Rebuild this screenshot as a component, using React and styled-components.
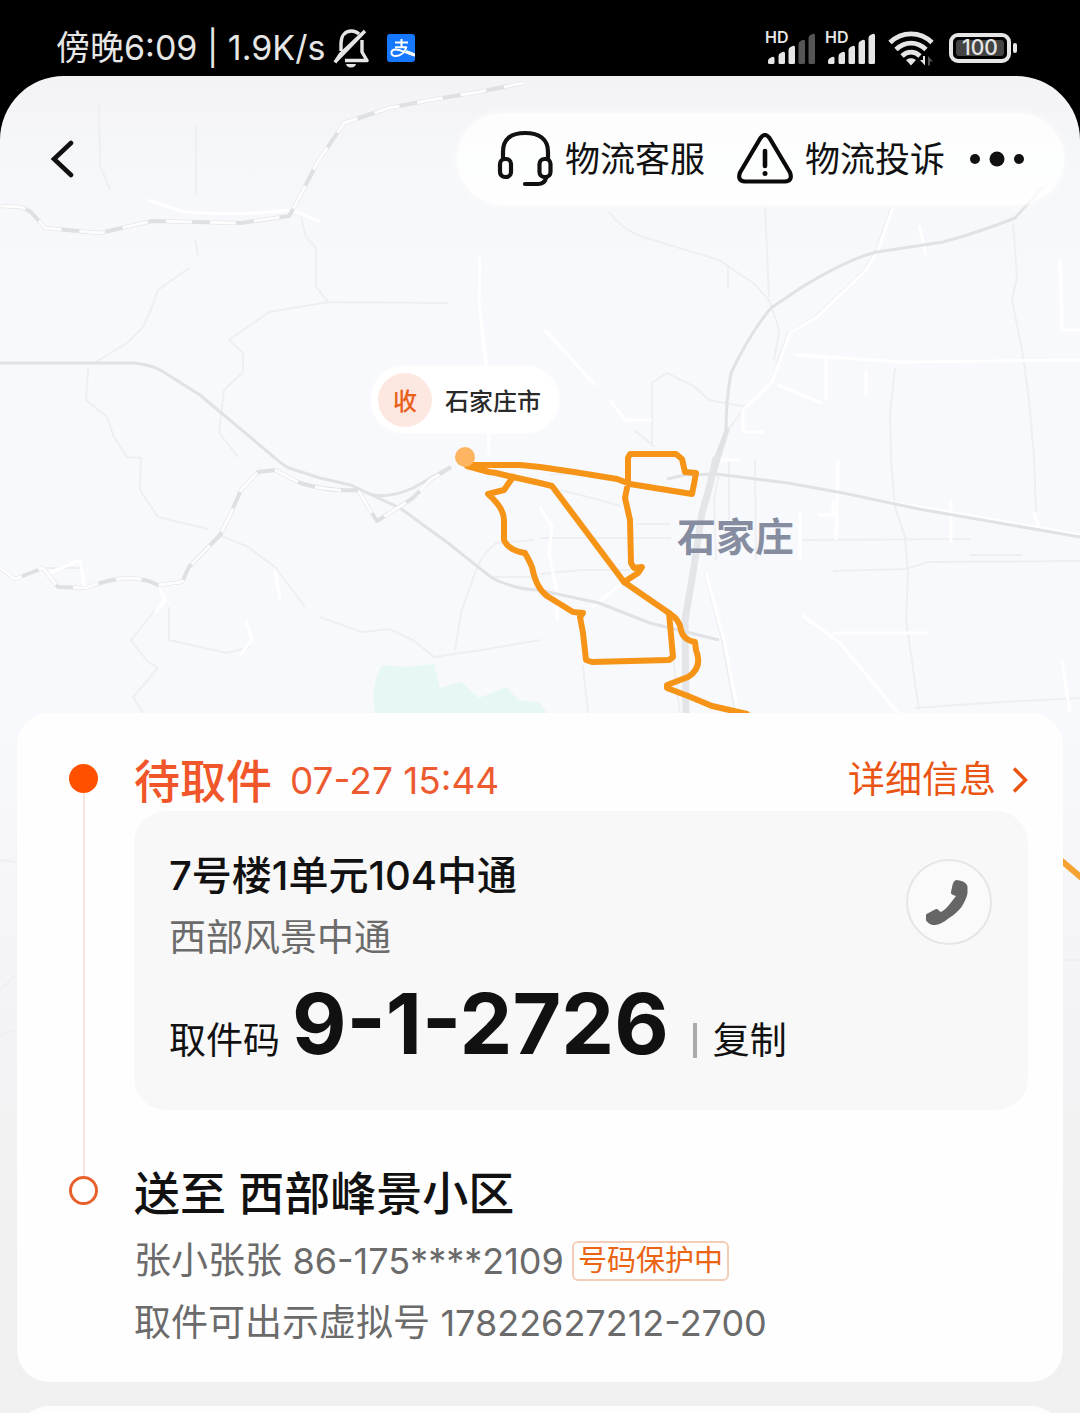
import React from "react";
import styled, { createGlobalStyle } from "styled-components";

const GlobalStyle = createGlobalStyle`
  *, *::before, *::after { box-sizing: border-box; }
  body {
    margin: 0;
    background: #000;
    font-family: Inter, "Noto Sans CJK SC", "Liberation Sans", sans-serif;
    color: #111;
  }
  button { font: inherit; color: inherit; background: none; border: 0; padding: 0; cursor: pointer; }
  a { color: inherit; text-decoration: none; }
  h1, h2, p { margin: 0; font-weight: inherit; }
  svg { display: block; }
`;

/* ---------- status bar ---------- */

const Page = styled.div`
  display: flex;
  flex-direction: column;
  min-height: 100vh;
  overflow: hidden;
`;

const StatusBar = styled.div`
  display: flex;
  align-items: center;
  justify-content: space-between;
  height: 76px;
  padding: 20px 69px 0 56px;
  color: #e6e6e6;
`;

const StatusGroup = styled.div`
  display: flex;
  align-items: center;
  gap: ${(p) => p.$gap}px;
`;

const Clock = styled.span`
  font-size: 34px;
  line-height: 40px;
  white-space: nowrap;
`;

const AppBadge = styled.span`
  display: flex;
  width: 28px;
  height: 28px;
  margin-left: 10px;
  border-radius: 3px;
  background: #1677ff;
`;

const Battery = styled.span`
  position: relative;
  display: flex;
  width: 62px;
  height: 30px;
  margin-left: 5px;
  padding: 3px;
  border: 4px solid #e6e6e6;
  border-radius: 9px;

  &::after {
    content: "";
    position: absolute;
    right: -10px;
    top: 6px;
    width: 4px;
    height: 10px;
    border-radius: 2px;
    background: #e6e6e6;
  }
`;

const BatteryLevel = styled.span`
  flex: 1;
  border-radius: 3px;
  background: #444;
  font-size: 21px;
  font-weight: 500;
  line-height: 16px;
  text-align: center;
`;

/* ---------- screen and header ---------- */

const Screen = styled.main`
  position: relative;
  display: flex;
  flex: 1;
  flex-direction: column;
  padding-top: 37px;
  overflow: hidden;
  border-radius: 64px 64px 0 0;
  background: linear-gradient(#f3f3f5 0, #f6f7fa 80px, #f8f9fd 200px, #f8f9fd 640px, #f4f4f7 900px, #f0f0f0 1200px);
`;

const MapLayer = styled.div`
  position: absolute;
  inset: 0 0 auto 0;
`;

const Header = styled.header`
  position: relative;
  display: flex;
  align-items: center;
  justify-content: space-between;
  padding: 0 16px 0 40px;
`;

const BackButton = styled.button`
  display: flex;
  padding: 10px;
`;

const ActionPill = styled.nav`
  display: flex;
  align-items: center;
  gap: 32px;
  height: 92px;
  padding: 0 39px 0 40px;
  border-radius: 46px;
  background: rgba(255, 255, 255, 0.8);
  box-shadow: 0 0 8px rgba(255, 255, 255, 0.8);
`;

const PillGroup = styled.div`
  display: flex;
  align-items: center;
  gap: 24px;
`;

const PillAction = styled.button`
  display: flex;
  align-items: center;
  gap: 12px;
  font-size: 35px;
  line-height: 48px;
  white-space: nowrap;
`;

const MapStage = styled.section`
  position: relative;
  height: 508px;
`;

const DestinationPin = styled.div`
  position: absolute;
  left: 371px;
  top: 161px;
  display: flex;
  align-items: center;
  gap: 13px;
  height: 67px;
  padding: 0 18px 0 7px;
  border-radius: 34px;
  background: #fff;
  box-shadow: 0 0 4px #fff;
  font-size: 24px;
  font-weight: 500;
  color: #2a2a2a;
  white-space: nowrap;
`;

const PinMark = styled.span`
  display: grid;
  place-items: center;
  width: 54px;
  height: 54px;
  border-radius: 50%;
  background: #fde7e1;
  color: #e8601c;
`;

const CityName = styled.span`
  position: absolute;
  left: 677px;
  top: 304px;
  font-size: 39px;
  font-weight: 700;
  line-height: 56px;
  color: #868da0;
`;

/* ---------- delivery sheet ---------- */

const Sheet = styled.section`
  position: relative;
  margin: 0 17px 24px;
  padding: 40px 35px 28px 52px;
  border-radius: 32px;
  background: #fefefe;
`;

const Step = styled.div`
  display: grid;
  grid-template-columns: 29px 1fr;
  column-gap: 36px;
`;

const Rail = styled.div`
  display: flex;
  flex-direction: column;
  align-items: center;

  &::before {
    content: "";
    width: 2px;
    height: 11px;
    background: ${(p) => (p.$last ? "#f6e6df" : "transparent")};
  }

  &::after {
    content: "";
    flex: 1;
    width: 2px;
    background: ${(p) => (p.$last ? "transparent" : "#f6e6df")};
  }
`;

const Dot = styled.span`
  width: 29px;
  height: 29px;
  border: 3px solid ${(p) => (p.$filled ? "#ff5000" : "#e8602c")};
  border-radius: 50%;
  background: ${(p) => (p.$filled ? "#ff5000" : "#fff")};
`;

const StepBody = styled.div`
  min-width: 0;
  padding-bottom: ${(p) => p.$space || 0}px;
`;

const StepHead = styled.div`
  display: flex;
  align-items: flex-start;
  justify-content: space-between;
  height: 52px;
  line-height: 56px;
  white-space: nowrap;
`;

const StepTitle = styled.h1`
  height: 52px;
  font-size: 46px;
  font-weight: 500;
  line-height: 56px;
  color: ${(p) => p.$color || "#111"};
`;

const StatusWrap = styled.div`
  display: flex;
  align-items: flex-start;
  gap: 18px;
  color: #ee5a30;
`;

const StatusTime = styled.time`
  font-size: 37px;
`;

const DetailLink = styled.a`
  display: flex;
  align-items: center;
  gap: 16px;
  height: 54px;
  font-size: 37px;
  color: #ea5514;
`;

const PickupBox = styled.div`
  margin-top: 6px;
  padding: 34px 36px 29px 35px;
  border-radius: 32px;
  background: #f8f8f8;
`;

const PickupTop = styled.div`
  display: flex;
  align-items: flex-start;
  justify-content: space-between;
`;

const PickupPlace = styled.h2`
  height: 62px;
  font-size: 40px;
  font-weight: 500;
  line-height: 62px;
`;

const BodyLine = styled.p`
  display: flex;
  align-items: center;
  gap: 8px;
  height: 62px;
  font-size: 37px;
  line-height: 62px;
  color: #6b6b6b;
  white-space: nowrap;
`;

const PhoneNumber = styled.span`
  font-size: 36px;
`;

const CallButton = styled.button`
  display: grid;
  place-items: center;
  width: 86px;
  height: 86px;
  margin-top: 14px;
  border: 2px solid #e6e6e6;
  border-radius: 50%;
  background: #fafafa;
`;

const CodeRow = styled.div`
  display: flex;
  align-items: baseline;
  height: 112px;
  font-size: 37px;
  line-height: 110px;
  white-space: nowrap;
`;

const Code = styled.strong`
  margin-left: 12px;
  font-size: 84px;
  font-weight: 700;
`;

const CopyButton = styled.button`
  margin-left: 24px;

  &::before {
    content: "";
    display: inline-block;
    width: 4px;
    height: 35px;
    margin-right: 16px;
    vertical-align: -4px;
    background: #aaa;
  }
`;

const Recipient = styled.div`
  margin-top: 13px;
`;

const ProtectTag = styled.span`
  padding: 0 4px;
  border: 2px solid #f3cdb8;
  border-radius: 6px;
  font-size: 29px;
  line-height: 36px;
  color: #ea6414;
`;

const NextPeek = styled.div`
  position: relative;
  flex: 1;
  min-height: 7px;
  max-height: 64px;
  margin: 0 17px;
  overflow: hidden;
`;

const NextCard = styled.div`
  position: absolute;
  inset: 0 0 auto 0;
  height: 64px;
  border-radius: 32px 32px 0 0;
  background: #fdfdfd;
`;

/* ---------- icons ---------- */

const BellOff = () => (
  <svg width="36" height="40" viewBox="0 0 36 40" fill="none" stroke="#e6e6e6" strokeWidth="3.4" strokeLinejoin="round" aria-hidden="true">
    <path d="M8 23V16C8 8 12 3 18.500 3c3 0 5.500 1 7.500 3" />
    <path d="M29 12v12l5 8.500H12" />
    <path d="M2 34.500 7.500 26 32 3M2 34 32 3" />
    <path d="M13 36h10c-.5 2-2 3.500-5 3.500S13.500 38 13 36z" fill="#e6e6e6" stroke="none" />
  </svg>
);

const PayMark = () => (
  <svg width="28" height="28" viewBox="0 0 28 28" fill="none" stroke="#fff" aria-hidden="true">
    <path d="M8 8.500h13M14.500 5v8M8 13.200h12" strokeWidth="2" />
    <path d="M19.500 13c-2 5.500-6 9-10.500 9-6 0-6-6.500-.5-6.500 5.500 0 9.500 3.500 19.500 6" strokeWidth="2" />
    <path d="M19 17.500l9 3.500" strokeWidth="3" />
  </svg>
);

const BARS = [
  [3, 26, 7],
  [13.5, 21, 12],
  [23.5, 15, 18],
  [33.5, 9, 24],
  [43.5, 3, 30],
];

const SignalIcon = styled.svg`
  margin: 0 -4px;
`;

const Signal = ({ level }) => (
  <SignalIcon width="58" height="46" viewBox="-4 -6 58 46" role="img" aria-label="HD">
    <text x="0" y="12" fill="#e6e6e6" fontSize="16" fontWeight="600" fontFamily="Inter, sans-serif">HD</text>
    {BARS.map(([x, y, h], i) => (
      <path
        key={x}
        d={`M${x} ${y + 4}q0-2 2-3l2-1q2.500-1 2.500 1.500V${y + h - 1.5}q0 1.500-1.500 1.500h-3.500q-1.500 0-1.500-1.500z`}
        fill={i < level ? "#e6e6e6" : "#555"}
      />
    ))}
  </SignalIcon>
);

const WifiIcon = styled.svg`
  margin-left: 3px;
`;

const Wifi = () => (
  <WifiIcon width="46" height="36" viewBox="0 0 46 36" fill="none" stroke="#e6e6e6" strokeWidth="4.800" aria-hidden="true">
    <path d="M2 12.500C14 1 32 1 44 12.500" />
    <path d="M8 19.500C17 11 29 11 38 19.500" />
    <path d="M14 26c5.500-5 12.500-5 18 0" />
    <path d="M18 30c3-2.500 7-2.500 10 0l-5 5.500z" fill="#e6e6e6" stroke="none" />
    <path d="M37 26v9.500l-5-5.500h3v-4z" fill="#e6e6e6" stroke="none" />
    <path d="M40 35.500V26l5 5.500h-3v4z" fill="#555" stroke="none" />
  </WifiIcon>
);

const Headset = () => (
  <svg width="56" height="58" viewBox="0 0 56 58" fill="none" stroke="#111" strokeWidth="4.200" strokeLinecap="round" aria-hidden="true">
    <path d="M6 29v-7C6 9 14 3 28 3s23 6 23 19v7" />
    <rect x="3" y="29" width="11" height="18" rx="5" />
    <rect x="42.500" y="29" width="11" height="18" rx="5" />
    <path d="M49 48c-1 4-3 6-8 6H28" />
  </svg>
);

const Warning = () => (
  <svg width="56" height="52" viewBox="0 0 56 52" fill="none" stroke="#0a0a0a" strokeWidth="4.200" strokeLinecap="round" aria-hidden="true">
    <path d="M23.500 5q4.500-6 9 0L53 39.500q3 8.500-5 9H8q-8-.5-5-9z" strokeLinejoin="round" />
    <path d="M28 18v15" strokeWidth="4.600" />
    <circle cx="28" cy="40.500" r="2.500" fill="#0a0a0a" stroke="none" />
  </svg>
);

const More = () => (
  <svg width="56" height="16" viewBox="0 0 56 16" fill="#111" aria-hidden="true">
    <circle cx="6" cy="8" r="5" />
    <circle cx="28" cy="8" r="7.500" />
    <circle cx="50" cy="8" r="5" />
  </svg>
);

const Back = () => (
  <svg width="24" height="38" viewBox="0 0 24 38" fill="none" stroke="#111" strokeWidth="4.600" strokeLinecap="round" strokeLinejoin="miter" aria-hidden="true">
    <path d="M21 3 4 19l17 16" />
  </svg>
);

const Chevron = () => (
  <svg width="16" height="26" viewBox="0 0 16 26" fill="none" stroke="#ea5514" strokeWidth="3.400" aria-hidden="true">
    <path d="M2 1.500 13.500 13 2 24.500" />
  </svg>
);

const Handset = () => (
  <svg width="46" height="46" viewBox="1 -1 46 46" fill="#666" aria-hidden="true">
    <path d="M31 0q4 0 7 1.500Q42.500 4 42.500 7v6Q42 18 36.500 27 31 34 24 38 17 44 10.500 45 6 45.500 3.500 43 0 40 0 37 0 34.500 3.500 33L10 29.500Q12 28.500 13.500 30L15.500 32Q19 31 24 25L31 16 28 15Q25.500 14 26 12L27.500 5Q28.500 1 31 0z" />
  </svg>
);

/* ---------- map ---------- */

const RAILWAYS = [
  "M0 363H134Q152 365 162 371L200 395 275 458Q284 466 289 468L320 478 351 485 365 492Q384 501 413 488L448 468",
  "M365 492 400 508 448 543 492 578Q516 590 540 590L557 594 599 603 650 623 719 640",
  "M667 479 685 475 716 474 788 483 843 493 919 509 1080 537",
  "M1043 187 1015 218Q980 232 943 242L877 252Q850 258 802 287L771 308Q750 333 731 373 726 400 726 430L716 457",
];

const DASHED = [
  "M0 206 21 207 31 212 45 228 100 233 152 221 241 223 289 216 298 200 317 163 344 123 389 108 430 100 479 92 523 83",
  "M0 568 15 579 43 568 58 587 86 588Q130 570 158 585L182 582 189 567 220 535 231 513 241 490 258 472 275 470 300 483Q330 492 358 490L368 507 377 521 413 498 430 480 451 467",
];

const LANES = [
  "M1013 223 1017 277 1012 300 1022 350 1029 400 1034 457 1036 512",
  "M895 368 890 413 891 460 895 507 905 537 908 573 906 620 919 710",
  "M609 212Q622 230 643 237L719 260 753 283 769 300Q780 330 779 333L774 360",
  "M765 207 769 297M728 267V287",
  "M652 447V383L667 373 695 387 709 400 747 407M634 430 655 447",
  "M540 538H671M802 540 970 539M833 571 905 569 929 562 1080 561M636 524H670M970 555H1022M540 574 580 570 630 570M492 577H540",
  "M195 240 198 255M189 268 158 290 152 307 143 327 127 343 96 362",
  "M88 368 86 400 107 417 114 437 127 457 141 458 140 490 158 517 208 529",
  "M301 217 306 237 316 248V287L329 303M448 303 329 302 269 312 229 340 243 353V372L224 390 219 433 238 457",
  "M220 535 248 547 275 567 305 607M320 617 362 632 389 629 413 640 434 657 482 650 540 640",
  "M534 540 496 543Q480 556 475 573L461 613 455 650",
  "M155 610 131 640 148 662 158 668 133 697 143 713M169 607V640L227 653 250 647",
  "M719 473 714 500 716 560M755 460 756 560M729 460V520M915 708 1000 702 1080 698",
  "M891 207 876 250 864 270 815 317 788 333 778 360 772 382 743 410 728 430",
  "M705 573 722 640 735 713M671 640 680 713M583 665 588 713M45 568 80 568",
  "M99 105 100 165 110 190M196 125V195M550 475 571 473M560 490 600 500 620 506",
  "M0 860 15 862M0 990 16 975M0 1035 16 1030M1063 960H1080",
];

const WHITE_ROADS = [
  "M148 200Q170 208 186 212 240 216 293 210L320 222",
  "M480 257 479 303 486 363 489 455",
  "M893 207 878 250 866 270 817 317 790 333 780 360 772 382 743 410",
  "M795 355 902 362 1080 360M826 355V400M866 370V395M778 385 822 403M743 410V432H765",
  "M919 225 926 255M1060 260 1062 330H1080",
  "M540 507 552 527 549 553 557 593V620M592 607 623 583",
  "M706 573 724 640 738 713M802 615 840 643 860 667 898 713M833 633H928",
  "M833 500V515M818 515H838M838 460 836 540M951 500V543M838 493 919 507 1080 535",
  "M45 575 80 560 85 588M158 585 165 600 155 613M246 620 252 640 240 655",
  "M275 570 280 600M545 330 595 385M610 400 625 420 652 420M1062 660 1070 713",
  "M714 460H740M700 565H690M1034 513 1040 530M800 510V560",
];

const ROUTES = [
  "M467 465H520L540 467 574 472 617 479 630 484 692 494 694 484 696 473 685 472 682 459 676 454H630L628 458V483L625 498 630 520 631 563 634 568 642 567 638 573 624 582",
  "M467 466 489 472 496 473 513 477 540 483 552 486 624 582 669 613Q680 620 681 630 683 640 695 642L696 650Q703 668 688 677L667 685V688L688 696 712 706 747 714",
  "M513 477 504 490 488 494Q504 508 504 520V540Q508 550 525 553 530 562 532 567 536 588 547 596L573 612 583 613 580 617 583 633 586 660 592 662 669 660 673 657 669 613",
];

const Lines = ({ paths, color, width, dash, cap }) => (
  <g fill="none" stroke={color} strokeWidth={width} strokeDasharray={dash} strokeLinecap={cap} strokeLinejoin="round">
    {paths.map((d) => (
      <path key={d} d={d} />
    ))}
  </g>
);

const RouteMap = () => (
  <svg width="1080" height="1337" viewBox="0 76 1080 1337" aria-hidden="true">
    <path d="M375 714 373 697Q376 670 384 665L405 667 434 664 440 688 461 682 479 698 506 687 519 700 540 703 548 714z" fill="#e6f7f5" />
    <Lines paths={LANES} color="#eeeff2" width={2} />
    <Lines paths={WHITE_ROADS} color="#fff" width={3} />
    <path d="M716 457Q712 480 702 513L693 573 685 620 686 714" fill="none" stroke="#e4e5e8" strokeWidth="7" />
    <path d="M728 428 714 474" fill="none" stroke="#e2e3e6" strokeWidth="4" />
    <Lines paths={RAILWAYS} color="#e1e2e5" width={3} />
    <Lines paths={DASHED} color="#dfe0e3" width={4} />
    <Lines paths={DASHED} color="#fdfdfe" width={3} dash="26 18" />
    <Lines paths={ROUTES} color="#f59416" width={6} cap="round" />
    <path d="M1056 856 1084 880" stroke="#f5a233" strokeWidth="6" />
    <circle cx="465" cy="457" r="10" fill="#fdb562" />
  </svg>
);

/* ---------- app ---------- */

export default function App() {
  return (
    <Page lang="zh-CN">
      <GlobalStyle />
      <StatusBar>
        <StatusGroup $gap={8}>
          <Clock>傍晚6:09 | 1.9K/s</Clock>
          <BellOff />
          <AppBadge>
            <PayMark />
          </AppBadge>
        </StatusGroup>
        <StatusGroup $gap={10}>
          <Signal level={3} />
          <Signal level={5} />
          <Wifi />
          <Battery>
            <BatteryLevel>100</BatteryLevel>
          </Battery>
        </StatusGroup>
      </StatusBar>

      <Screen>
        <MapLayer>
          <RouteMap />
        </MapLayer>

        <Header>
          <BackButton aria-label="返回">
            <Back />
          </BackButton>
          <ActionPill>
            <PillAction>
              <Headset />
              物流客服
            </PillAction>
            <PillGroup>
              <PillAction>
                <Warning />
                物流投诉
              </PillAction>
              <PillAction aria-label="更多">
                <More />
              </PillAction>
            </PillGroup>
          </ActionPill>
        </Header>

        <MapStage>
          <DestinationPin>
            <PinMark>收</PinMark>
            石家庄市
          </DestinationPin>
          <CityName>石家庄</CityName>
        </MapStage>

        <Sheet>
          <Step>
            <Rail>
              <Dot $filled />
            </Rail>
            <StepBody $space={55}>
              <StepHead>
                <StatusWrap>
                  <StepTitle $color="#f0562a">待取件</StepTitle>
                  <StatusTime>07-27 15:44</StatusTime>
                </StatusWrap>
                <DetailLink href="#detail">
                  详细信息
                  <Chevron />
                </DetailLink>
              </StepHead>
              <PickupBox>
                <PickupTop>
                  <div>
                    <PickupPlace>7号楼1单元104中通</PickupPlace>
                    <BodyLine>西部风景中通</BodyLine>
                  </div>
                  <CallButton aria-label="拨打电话">
                    <Handset />
                  </CallButton>
                </PickupTop>
                <CodeRow>
                  取件码
                  <Code>9-1-2726</Code>
                  <CopyButton>复制</CopyButton>
                </CodeRow>
              </PickupBox>
            </StepBody>
          </Step>

          <Step>
            <Rail $last>
              <Dot />
            </Rail>
            <StepBody>
              <StepTitle as="h2">送至 西部峰景小区</StepTitle>
              <Recipient>
                <BodyLine>
                  <span>
                    张小张张 <PhoneNumber>86-175****2109</PhoneNumber>
                  </span>
                  <ProtectTag>号码保护中</ProtectTag>
                </BodyLine>
                <BodyLine>
                  <span>
                    取件可出示虚拟号 <PhoneNumber>17822627212-2700</PhoneNumber>
                  </span>
                </BodyLine>
              </Recipient>
            </StepBody>
          </Step>
        </Sheet>

        <NextPeek>
          <NextCard />
        </NextPeek>
      </Screen>
    </Page>
  );
}
